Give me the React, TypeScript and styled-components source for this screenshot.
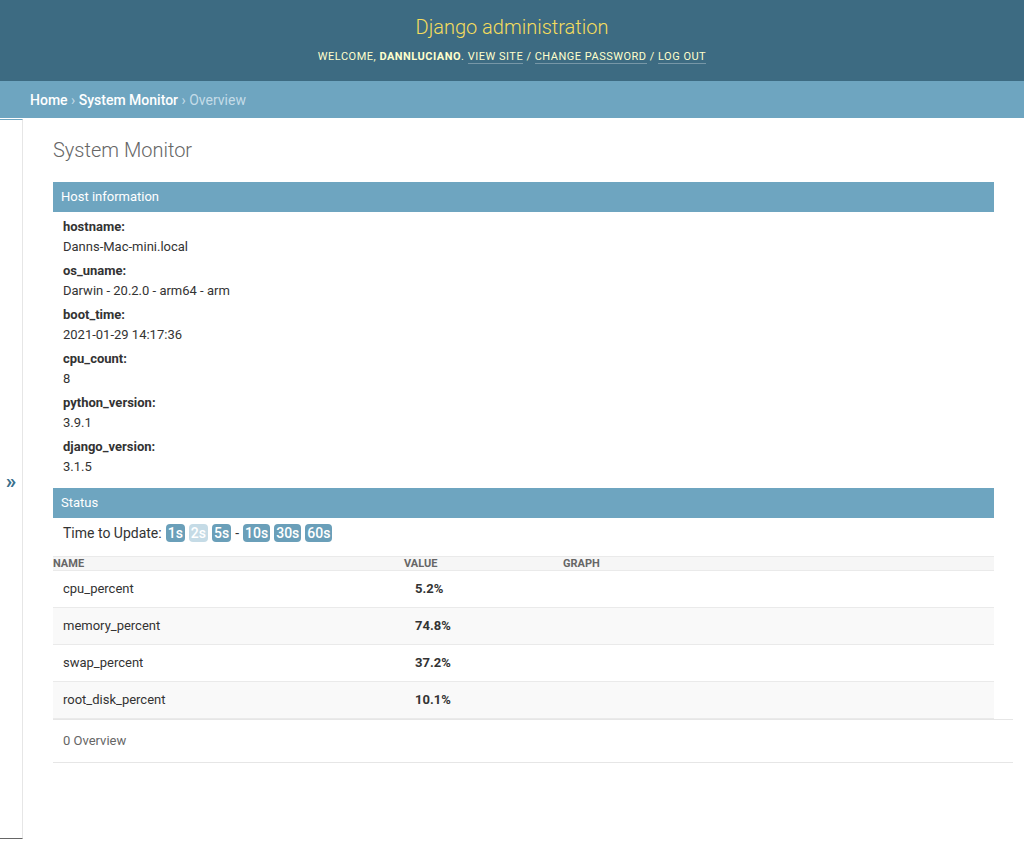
import styled, { createGlobalStyle } from 'styled-components';

const GlobalStyle = createGlobalStyle`
  html, body {
    margin: 0;
    padding: 0;
    background: #fff;
  }
  body {
    font-family: Roboto, "Liberation Sans", Arial, sans-serif;
    font-size: 14px;
    color: #333;
  }
  * {
    box-sizing: border-box;
  }
`;

const Header = styled.header`
  display: flex;
  flex-direction: column;
  align-items: center;
  padding: 15px 30px 14px;
  background: #3d6b82;
  color: #ffc;
`;

const Branding = styled.h1`
  margin: 0 0 8px;
  font-size: 20px;
  line-height: 24px;
  font-weight: 300;
  color: #f5dd5d;
`;

const UserTools = styled.div`
  font-size: 11px;
  line-height: 20px;
  letter-spacing: 0.5px;
  text-transform: uppercase;
  color: #ffc;
`;

const ToolLink = styled.a`
  color: #ffc;
  text-decoration: none;
  border-bottom: 1px solid rgba(255, 255, 255, 0.3);
`;

const Breadcrumbs = styled.nav`
  padding: 11px 30px 9px;
  background: #6ea5c0;
  font-size: 14px;
  line-height: 17px;
  color: #c4dce8;
`;

const Crumb = styled.a`
  color: #fff;
  font-weight: 500;
  text-decoration: none;
`;

const Main = styled.div`
  display: flex;
  min-height: calc(100vh - 118px);
`;

const SidebarToggle = styled.div`
  flex: 0 0 23px;
  display: flex;
  align-items: center;
  justify-content: center;
  margin-top: 1px;
  height: 720px;
  border-top: 1px solid #6ea5c0;
  border-bottom: 1px solid #666;
  border-right: 1px solid #e6e6e6;
  color: #3b6f8c;
  font-size: 21px;
  font-weight: 700;
  line-height: 1;
  padding-top: 4px;
`;

const Content = styled.main`
  flex: 1;
  padding: 20px 30px 30px;
  min-width: 0;
`;

const Title = styled.h1`
  margin: 0 0 20px;
  font-size: 20px;
  line-height: 24px;
  font-weight: 300;
  color: #666;
`;

const Caption = styled.div`
  padding: 8px;
  background: #6ea5c0;
  color: #fff;
  font-size: 13px;
  line-height: 14px;
`;

const Field = styled.div`
  padding: 6px 10px 0;
  font-size: 13px;
`;

const FieldLabel = styled.div`
  font-weight: 700;
  line-height: 18px;
  margin-bottom: 2px;
`;

const FieldValue = styled.div`
  line-height: 18px;
`;

const Section = styled.section<{ $gap?: number }>`
  margin-bottom: ${(p) => p.$gap ?? 0}px;
`;

const UpdateRow = styled.div`
  display: flex;
  align-items: center;
  gap: 4px;
  padding: 6px 10px;
  font-size: 14px;
  line-height: 18px;
  margin-bottom: 8px;
`;

const Badge = styled.span<{ $active?: boolean }>`
  display: inline-block;
  padding: 0 2px;
  border-radius: 4px;
  background: ${(p) => (p.$active ? '#c5dbe6' : '#6a9fb9')};
  color: #fff;
  font-size: 14px;
  font-weight: 500;
  line-height: 18px;
`;

const Table = styled.table`
  width: 100%;
  border-collapse: collapse;
  font-size: 13px;
`;

const Th = styled.th<{ $width?: number }>`
  width: ${(p) => (p.$width ? `${p.$width}px` : 'auto')};
  padding: 1px 0 0;
  text-align: left;
  font-size: 11px;
  line-height: 12px;
  font-weight: 700;
  text-transform: uppercase;
  color: #666;
  background: #f6f6f6;
  border-top: 1px solid #eaeaea;
  border-bottom: 1px solid #eaeaea;
`;

const Tr = styled.tr<{ $alt?: boolean }>`
  background: ${(p) => (p.$alt ? '#f9f9f9' : '#fff')};
  border-bottom: 1px solid #eaeaea;
`;

const Td = styled.td<{ $bold?: boolean; $pad?: number }>`
  padding: 10px ${(p) => p.$pad ?? 10}px;
  line-height: 16px;
  font-weight: ${(p) => (p.$bold ? 700 : 400)};
`;

const Paginator = styled.p`
  margin: 0 -19px 0 0;
  padding: 13px 10px;
  line-height: 16px;
  font-size: 13px;
  color: #666;
  border-top: 1px solid #e6e6e6;
  border-bottom: 1px solid #e6e6e6;
`;

const hostInfo = [
  ['hostname', 'Danns-Mac-mini.local'],
  ['os_uname', 'Darwin - 20.2.0 - arm64 - arm'],
  ['boot_time', '2021-01-29 14:17:36'],
  ['cpu_count', '8'],
  ['python_version', '3.9.1'],
  ['django_version', '3.1.5'],
];

const metrics = [
  ['cpu_percent', '5.2%'],
  ['memory_percent', '74.8%'],
  ['swap_percent', '37.2%'],
  ['root_disk_percent', '10.1%'],
];

export default function App() {
  return (
    <>
      <GlobalStyle />
      <Header>
        <Branding>Django administration</Branding>
        <UserTools>
          Welcome, <strong>dannluciano</strong>. <ToolLink href="#">View site</ToolLink> /{' '}
          <ToolLink href="#">Change password</ToolLink> / <ToolLink href="#">Log out</ToolLink>
        </UserTools>
      </Header>
      <Breadcrumbs>
        <Crumb href="#">Home</Crumb> › <Crumb href="#">System Monitor</Crumb> › Overview
      </Breadcrumbs>
      <Main>
        <SidebarToggle>»</SidebarToggle>
        <Content>
          <Title>System Monitor</Title>
          <Section $gap={12}>
            <Caption>Host information</Caption>
            {hostInfo.map(([label, value]) => (
              <Field key={label}>
                <FieldLabel>{label}:</FieldLabel>
                <FieldValue>{value}</FieldValue>
              </Field>
            ))}
          </Section>
          <Section>
            <Caption>Status</Caption>
            <UpdateRow>
              Time to Update:
              <Badge>1s</Badge>
              <Badge $active>2s</Badge>
              <Badge>5s</Badge>
              <span>-</span>
              <Badge>10s</Badge>
              <Badge>30s</Badge>
              <Badge>60s</Badge>
            </UpdateRow>
            <Table>
              <thead>
                <tr>
                  <Th $width={351}>Name</Th>
                  <Th $width={159}>Value</Th>
                  <Th>Graph</Th>
                </tr>
              </thead>
              <tbody>
                {metrics.map(([name, value], i) => (
                  <Tr key={name} $alt={i % 2 === 1}>
                    <Td>{name}</Td>
                    <Td $bold $pad={11}>{value}</Td>
                    <Td />
                  </Tr>
                ))}
              </tbody>
            </Table>
            <Paginator>0 Overview</Paginator>
          </Section>
        </Content>
      </Main>
    </>
  );
}
